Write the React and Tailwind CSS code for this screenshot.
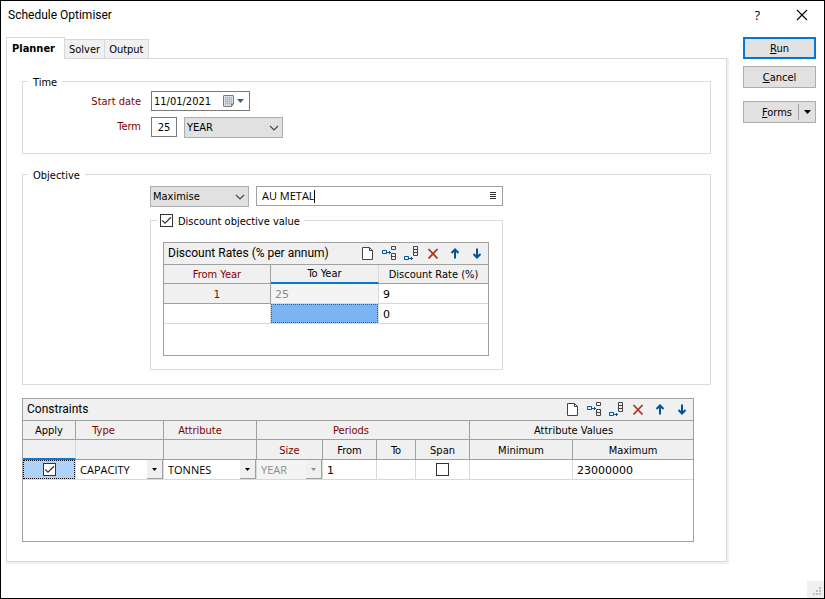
import { useState } from 'react';

const caption = "font-['Roboto','Open_Sans',sans-serif] text-xs";
const cellText = "font-['Open_Sans','Noto_Sans',sans-serif]";
const numberText = "font-['DejaVu_Sans',sans-serif]";

function CheckBox({ checked, onChange, label, id }) {
  return (
    <span className="relative inline-block h-[13px] w-[13px] shrink-0 align-middle">
      <input
        id={id}
        type="checkbox"
        aria-label={label}
        checked={checked}
        onChange={(e) => onChange(e.target.checked)}
        className="block h-[13px] w-[13px] appearance-none border border-[#333] bg-white"
      />
      {checked && (
        <svg className="pointer-events-none absolute inset-0" width="13" height="13" viewBox="0 0 13 13" fill="none">
          <path d="M2.2 6.4 L5 9.2 L11 3.2" stroke="#333" strokeWidth="1.3" />
        </svg>
      )}
    </span>
  );
}

function ComboBox({ value, onChange, options, label, id }) {
  return (
    <span className="relative inline-block w-[99px]">
      <select
        id={id}
        aria-label={label}
        value={value}
        onChange={(e) => onChange(e.target.value)}
        className="block h-[21px] w-full appearance-none border border-[#adadad] bg-[#e1e1e1] pl-[2px] pr-5 pt-px"
      >
        {options.map((o) => <option key={o}>{o}</option>)}
      </select>
      <svg className="pointer-events-none absolute right-1 top-2" width="10" height="7" viewBox="0 0 10 7" fill="none">
        <path d="M1 1 L5 5 L9 1" stroke="#444" strokeWidth="1.1" />
      </svg>
    </span>
  );
}

// drop-down inside a grid cell
function CellSelect({ value, options, label, disabled }) {
  return (
    <span className={`relative block h-[19px] ${disabled ? 'bg-[#f4f4f4]' : ''}`}>
      <select
        aria-label={label}
        defaultValue={value}
        disabled={disabled}
        className={`block h-[19px] w-full appearance-none pl-1 pr-4 ${cellText} ${disabled ? 'text-[#8c8c8c]' : 'text-black'}`}
      >
        {options.map((o) => <option key={o}>{o}</option>)}
      </select>
      <span className="pointer-events-none absolute right-0 top-0 flex h-[19px] w-4 items-center justify-center border-b border-r border-[#a0a0a0] bg-[#f0f0f0]">
        <svg width="5" height="3" viewBox="0 0 5 3">
          <path d="M0 0 H5 L2.5 3 Z" fill={disabled ? '#8c8c8c' : '#000'} />
        </svg>
      </span>
    </span>
  );
}

const tools = [
  {
    name: 'New',
    icon: (
      <g stroke="#444" fill="#fff">
        <path d="M3.5 2.5 H10.5 L13.5 5.5 V14.5 H3.5 Z" />
        <path d="M10.5 2.5 V5.5 H13.5" fill="none" />
      </g>
    ),
  },
  {
    name: 'Insert',
    icon: (
      <g fill="none">
        <path d="M1.5 5.5 H5.5 V8.5 H1.5 Z M6 7.5 H10 M8.5 6 V9" stroke="#00539c" />
        <path d="M10.5 1.5 H14.5 V4.5 H10.5 Z M10.5 8.5 H14.5 V14.5 H10.5 Z M10.5 11.5 H14.5" stroke="#444" />
      </g>
    ),
  },
  {
    name: 'Append',
    icon: (
      <g fill="none">
        <path d="M1.5 11.5 H5.5 V14.5 H1.5 Z M6 13.5 H10 M8.5 12 V15" stroke="#00539c" />
        <path d="M10.5 1.5 H14.5 V10.5 H10.5 Z M10.5 4.5 H14.5 M10.5 7.5 H14.5" stroke="#444" />
      </g>
    ),
  },
  { name: 'Delete', icon: <path d="M3.5 4 L12.5 13.5 M12.5 4 L3.5 13.5" stroke="#b0311e" strokeWidth="1.8" fill="none" /> },
  { name: 'Move up', icon: <path d="M8 4.5 V13.5 M4.5 8 L8 4.5 L11.5 8" stroke="#00539c" strokeWidth="2" fill="none" /> },
  { name: 'Move down', icon: <path d="M8 3.5 V12.5 M4.5 9 L8 12.5 L11.5 9" stroke="#00539c" strokeWidth="2" fill="none" /> },
];

function GridPanel({ title, children, className }) {
  return (
    <section className={`border border-[#a0a0a0] bg-white ${className}`}>
      <header className="flex h-[22px] items-center justify-between border-b border-[#a0a0a0] bg-[#f0f0f0] pb-px pl-1">
        <h2 className={caption}>{title}</h2>
        <div className="flex">
          {tools.map((t) => (
            <button key={t.name} type="button" aria-label={t.name} className="flex w-[22px] justify-center">
              <svg width="16" height="16" viewBox="0 0 16 16">{t.icon}</svg>
            </button>
          ))}
        </div>
      </header>
      {children}
    </section>
  );
}

const th = 'border-b border-r border-[#a0a0a0] bg-[#f0f0f0] p-0 pt-px font-normal leading-[17px]';
// header of the column that holds the selected cell
const activeTh = 'border-b-2 border-r border-b-[#0078d7] border-r-[#d9d9d9] bg-[#f0f0f0] p-0 font-normal leading-[17px]';
const td = 'border-b border-r border-[#d9d9d9] p-0 h-5 leading-[19px]';
const cellInput = 'block h-[19px] w-full bg-transparent px-1 pt-px outline-none';

function DiscountRates() {
  return (
    <table className="w-full table-fixed border-separate border-spacing-0">
      <colgroup>
        <col className="w-[107px]" />
        <col className="w-[108px]" />
        <col />
      </colgroup>
      <thead>
        <tr className="h-[19px]">
          <th className={`${th} text-[#800000]`}>From Year</th>
          <th className={activeTh}>To Year</th>
          <th className={`${th} border-r-0`}>Discount Rate (%)</th>
        </tr>
      </thead>
      <tbody>
        <tr>
          <td className="h-5 border-b border-r border-[#a0a0a0] bg-[#f0f0f0] p-0 pt-[2px] text-center leading-[17px] text-[#800000]">1</td>
          <td className={`${td} bg-[#f4f4f4]`}>
            <input aria-label="To year 1" disabled defaultValue="25" className={`${cellInput} ${numberText} text-[#8c8c8c]`} />
          </td>
          <td className={`${td} border-r-0`}>
            <input aria-label="Discount rate 1" defaultValue="9" className={`${cellInput} ${numberText}`} />
          </td>
        </tr>
        <tr>
          <td className={td} />
          <td className={`${td} bg-[#7ab4f2]`}>
            <input aria-label="To year 2" className="block h-[19px] w-full border border-dotted border-[#8a4b10] bg-transparent px-1 outline-none" />
          </td>
          <td className={`${td} border-r-0`}>
            <input aria-label="Discount rate 2" defaultValue="0" className={`${cellInput} ${numberText}`} />
          </td>
        </tr>
      </tbody>
    </table>
  );
}

function Constraints() {
  const [apply, setApply] = useState(true);
  const [span, setSpan] = useState(false);

  return (
    <table className="w-full table-fixed border-separate border-spacing-0">
      <colgroup>
        <col className="w-[53px]" />
        <col className="w-[88px]" />
        <col className="w-[93px]" />
        <col className="w-[66px]" />
        <col className="w-[54px]" />
        <col className="w-[39px]" />
        <col className="w-[54px]" />
        <col className="w-[103px]" />
        <col />
      </colgroup>
      <thead>
        <tr className="h-[19px]">
          <th className={th}>Apply</th>
          <th className={`${th} pr-8 text-[#800000]`}>Type</th>
          <th className={`${th} pr-5 text-[#800000]`}>Attribute</th>
          <th colSpan="4" className={`${th} pr-6 text-[#800000]`}>Periods</th>
          <th colSpan="2" className={`${th} border-r-0 pr-4`}>Attribute Values</th>
        </tr>
        <tr className="h-5">
          <th className={activeTh} />
          <th className={th} />
          <th className={th} />
          <th className={`${th} text-[#800000]`}>Size</th>
          <th className={th}>From</th>
          <th className={th}>To</th>
          <th className={th}>Span</th>
          <th className={th}>Minimum</th>
          <th className={`${th} border-r-0`}>Maximum</th>
        </tr>
      </thead>
      <tbody>
        <tr>
          <td className={`${td} bg-[#afd3f8]`}>
            <div className="flex h-[19px] items-center justify-center border border-dotted border-black">
              <CheckBox checked={apply} onChange={setApply} label="Apply" />
            </div>
          </td>
          <td className={td}><CellSelect value="CAPACITY" label="Type" options={['CAPACITY', 'RATIO']} /></td>
          <td className={td}><CellSelect value="TONNES" label="Attribute" options={['TONNES', 'AU METAL']} /></td>
          <td className={td}><CellSelect value="YEAR" label="Size" options={['YEAR', 'MONTH']} disabled /></td>
          <td className={td}><input aria-label="From" defaultValue="1" className={`${cellInput} ${numberText}`} /></td>
          <td className={td}><input aria-label="To" className={cellInput} /></td>
          <td className={td}>
            <div className="flex h-[19px] items-center justify-center">
              <CheckBox checked={span} onChange={setSpan} label="Span" />
            </div>
          </td>
          <td className={td}><input aria-label="Minimum" className={cellInput} /></td>
          <td className={`${td} border-r-0`}>
            <input aria-label="Maximum" defaultValue="23000000" className={`${cellInput} ${numberText}`} />
          </td>
        </tr>
      </tbody>
    </table>
  );
}

const tabs = ['Planner', 'Solver', 'Output'];

function App() {
  const [activeTab, setActiveTab] = useState('Planner');
  const [unit, setUnit] = useState('YEAR');
  const [goal, setGoal] = useState('Maximise');
  const [discount, setDiscount] = useState(true);

  return (
    <div className="flex min-h-screen flex-col border border-black bg-white font-['DejaVu_Sans_Condensed','DejaVu_Sans',sans-serif] text-[11px] leading-4 text-black">
      <header className="flex h-7 items-center justify-between pl-[7px] pr-4">
        <h1 className={caption}>Schedule Optimiser</h1>
        <div className="flex items-center gap-9">
          <button type="button" aria-label="Help" className="font-['Open_Sans',sans-serif] text-[13px] font-medium">?</button>
          <button type="button" aria-label="Close">
            <svg width="12" height="12" viewBox="0 0 12 12" fill="none">
              <path d="M1 1 L11 11 M11 1 L1 11" stroke="#000" strokeWidth="1.1" />
            </svg>
          </button>
        </div>
      </header>

      <div className="flex gap-[14px] pl-[5px] pr-2 pt-2">
        <main className="min-w-0 flex-1">
          <div role="tablist" className="flex items-end">
            {tabs.map((tab) => (
              <button
                key={tab}
                type="button"
                role="tab"
                aria-selected={activeTab === tab}
                onClick={() => setActiveTab(tab)}
                className={activeTab === tab
                  ? 'relative z-10 -mb-px h-[22px] border border-b-0 border-[#d9d9d9] bg-white pl-[5px] pr-[9px] font-bold'
                  : 'h-[19px] border border-b-0 border-l-0 border-[#d9d9d9] bg-[#f0f0f0] px-1 pt-px'}
              >
                {tab}
              </button>
            ))}
          </div>

          <div className="border-b-2 border-r-2 border-[#f0f0f0]">
            <div role="tabpanel" className="border border-[#d9d9d9] pb-[19px] pl-[15px] pr-[15px] pt-[14px]">
              <fieldset className="h-[81px] border border-[#dcdcdc]">
                <legend className="ml-[5px] px-[5px] pt-1 leading-3">Time</legend>
                <div className="grid grid-cols-[118px_1fr] gap-x-[10px] gap-y-[6px] pt-[2px]">
                  <label htmlFor="start" className="pt-[3px] text-right text-[#800000]">Start date</label>
                  <div className="flex">
                    <div className="flex h-5 w-[99px] items-center border border-[#7a7a7a] bg-white">
                      <input id="start" defaultValue="11/01/2021" className="w-[71px] min-w-0 pl-[2px] pt-px outline-none" />
                      <button type="button" aria-label="Open calendar" className="flex items-center gap-[2px]">
                        <svg width="12" height="12" viewBox="0 0 12 12">
                          <path d="M1 0.5 H10 Q10.5 0.5 10.5 1 V8.5 L8.5 11.5 H1 Q0.5 11.5 0.5 11 V1 Q0.5 0.5 1 0.5 Z" fill="#dde3ec" stroke="#80777a" />
                          <path d="M2.5 2 V10 M4.5 2 V10 M6.5 2 V10 M8.5 2 V8 M2 2.5 H9 M2 4.5 H9 M2 6.5 H9 M2 8.5 H8" stroke="#9fb0c8" strokeWidth="0.7" />
                          <path d="M8 12 V8.5 H11 Z" fill="#80777a" />
                        </svg>
                        <svg width="7" height="4" viewBox="0 0 7 4"><path d="M0 0 H7 L3.5 4 Z" fill="#44618f" /></svg>
                      </button>
                    </div>
                  </div>
                  <label htmlFor="term" className="pt-[2px] text-right text-[#800000]">Term</label>
                  <div className="flex gap-[7px]">
                    <input id="term" defaultValue="25" className="h-5 w-[26px] border border-[#7a7a7a] text-center outline-none" />
                    <ComboBox value={unit} onChange={setUnit} label="Term unit" options={['YEAR', 'MONTH']} />
                  </div>
                </div>
              </fieldset>

              <fieldset className="mt-3 h-[219px] border border-[#dcdcdc]">
                <legend className="ml-[5px] px-[5px] pt-1 leading-3">Objective</legend>
                <div className="ml-[127px] w-[353px] pt-1">
                  <div className="flex gap-[7px]">
                    <ComboBox value={goal} onChange={setGoal} label="Goal" options={['Maximise', 'Minimise']} />
                    <div className="flex h-5 flex-1 items-center justify-between border border-[#a0a0a6] bg-white pl-[5px] pr-[5px]">
                      <div className="flex min-w-0 flex-1 items-center">
                        <input aria-label="Attribute" defaultValue="AU METAL" size="8" className={`w-[52px] ${cellText} outline-none`} />
                        <span className="h-[13px] w-px bg-black" />
                      </div>
                      <button type="button" aria-label="Pick attribute">
                        <svg width="8" height="8" viewBox="0 0 8 8">
                          <path d="M1 0.5 H7 M1 2.5 H7 M1 4.5 H7 M1 6.5 H7" stroke="#333" />
                        </svg>
                      </button>
                    </div>
                  </div>

                  <fieldset className="mt-[5px] border border-[#dcdcdc] pb-[13px] pl-3 pr-[13px]">
                    <legend className="-ml-[6px] flex items-center gap-[5px] pl-[3px] pr-1">
                      <CheckBox id="discount" checked={discount} onChange={setDiscount} />
                      <label htmlFor="discount" className="pt-1 leading-3">Discount objective value</label>
                    </legend>
                    <GridPanel title="Discount Rates (% per annum)" className="mt-[14px] h-[114px]">
                      <DiscountRates />
                    </GridPanel>
                  </fieldset>
                </div>
              </fieldset>

              <GridPanel title="Constraints" className="mr-[17px] mt-[13px] h-36">
                <Constraints />
              </GridPanel>
            </div>
          </div>
        </main>

        <aside className="flex w-[73px] flex-col">
          <button type="button" className="h-[22px] border-2 border-[#0078d7] bg-[#e1e1e1] pt-px"><u>R</u>un</button>
          <button type="button" className="mt-[7px] h-[22px] border border-[#adadad] bg-[#e1e1e1] pt-px"><u>C</u>ancel</button>
          <div className="mt-[13px] flex h-[22px] items-center border border-[#adadad] bg-[#e1e1e1]">
            <button type="button" className="flex-1 pl-4 pt-px"><u>F</u>orms</button>
            <button type="button" aria-label="More forms" className="ml-1 flex h-4 w-[17px] items-center justify-center border-l border-[#a0a0a0]">
              <svg width="7" height="4" viewBox="0 0 7 4"><path d="M0 0 H7 L3.5 4 Z" fill="#000" /></svg>
            </button>
          </div>
        </aside>
      </div>

      <footer className="mt-auto flex justify-end">
        <div className="flex h-[17px] w-[17px] items-end justify-end bg-[#f0f0f0] p-[3px]">
          <svg width="8" height="8" viewBox="0 0 8 8" fill="#bfbfbf">
            <path d="M6 0 H8 V2 H6 Z M3 3 H5 V5 H3 Z M6 3 H8 V5 H6 Z M0 6 H2 V8 H0 Z M3 6 H5 V8 H3 Z M6 6 H8 V8 H6 Z" />
          </svg>
        </div>
      </footer>
    </div>
  );
}

export default App;
